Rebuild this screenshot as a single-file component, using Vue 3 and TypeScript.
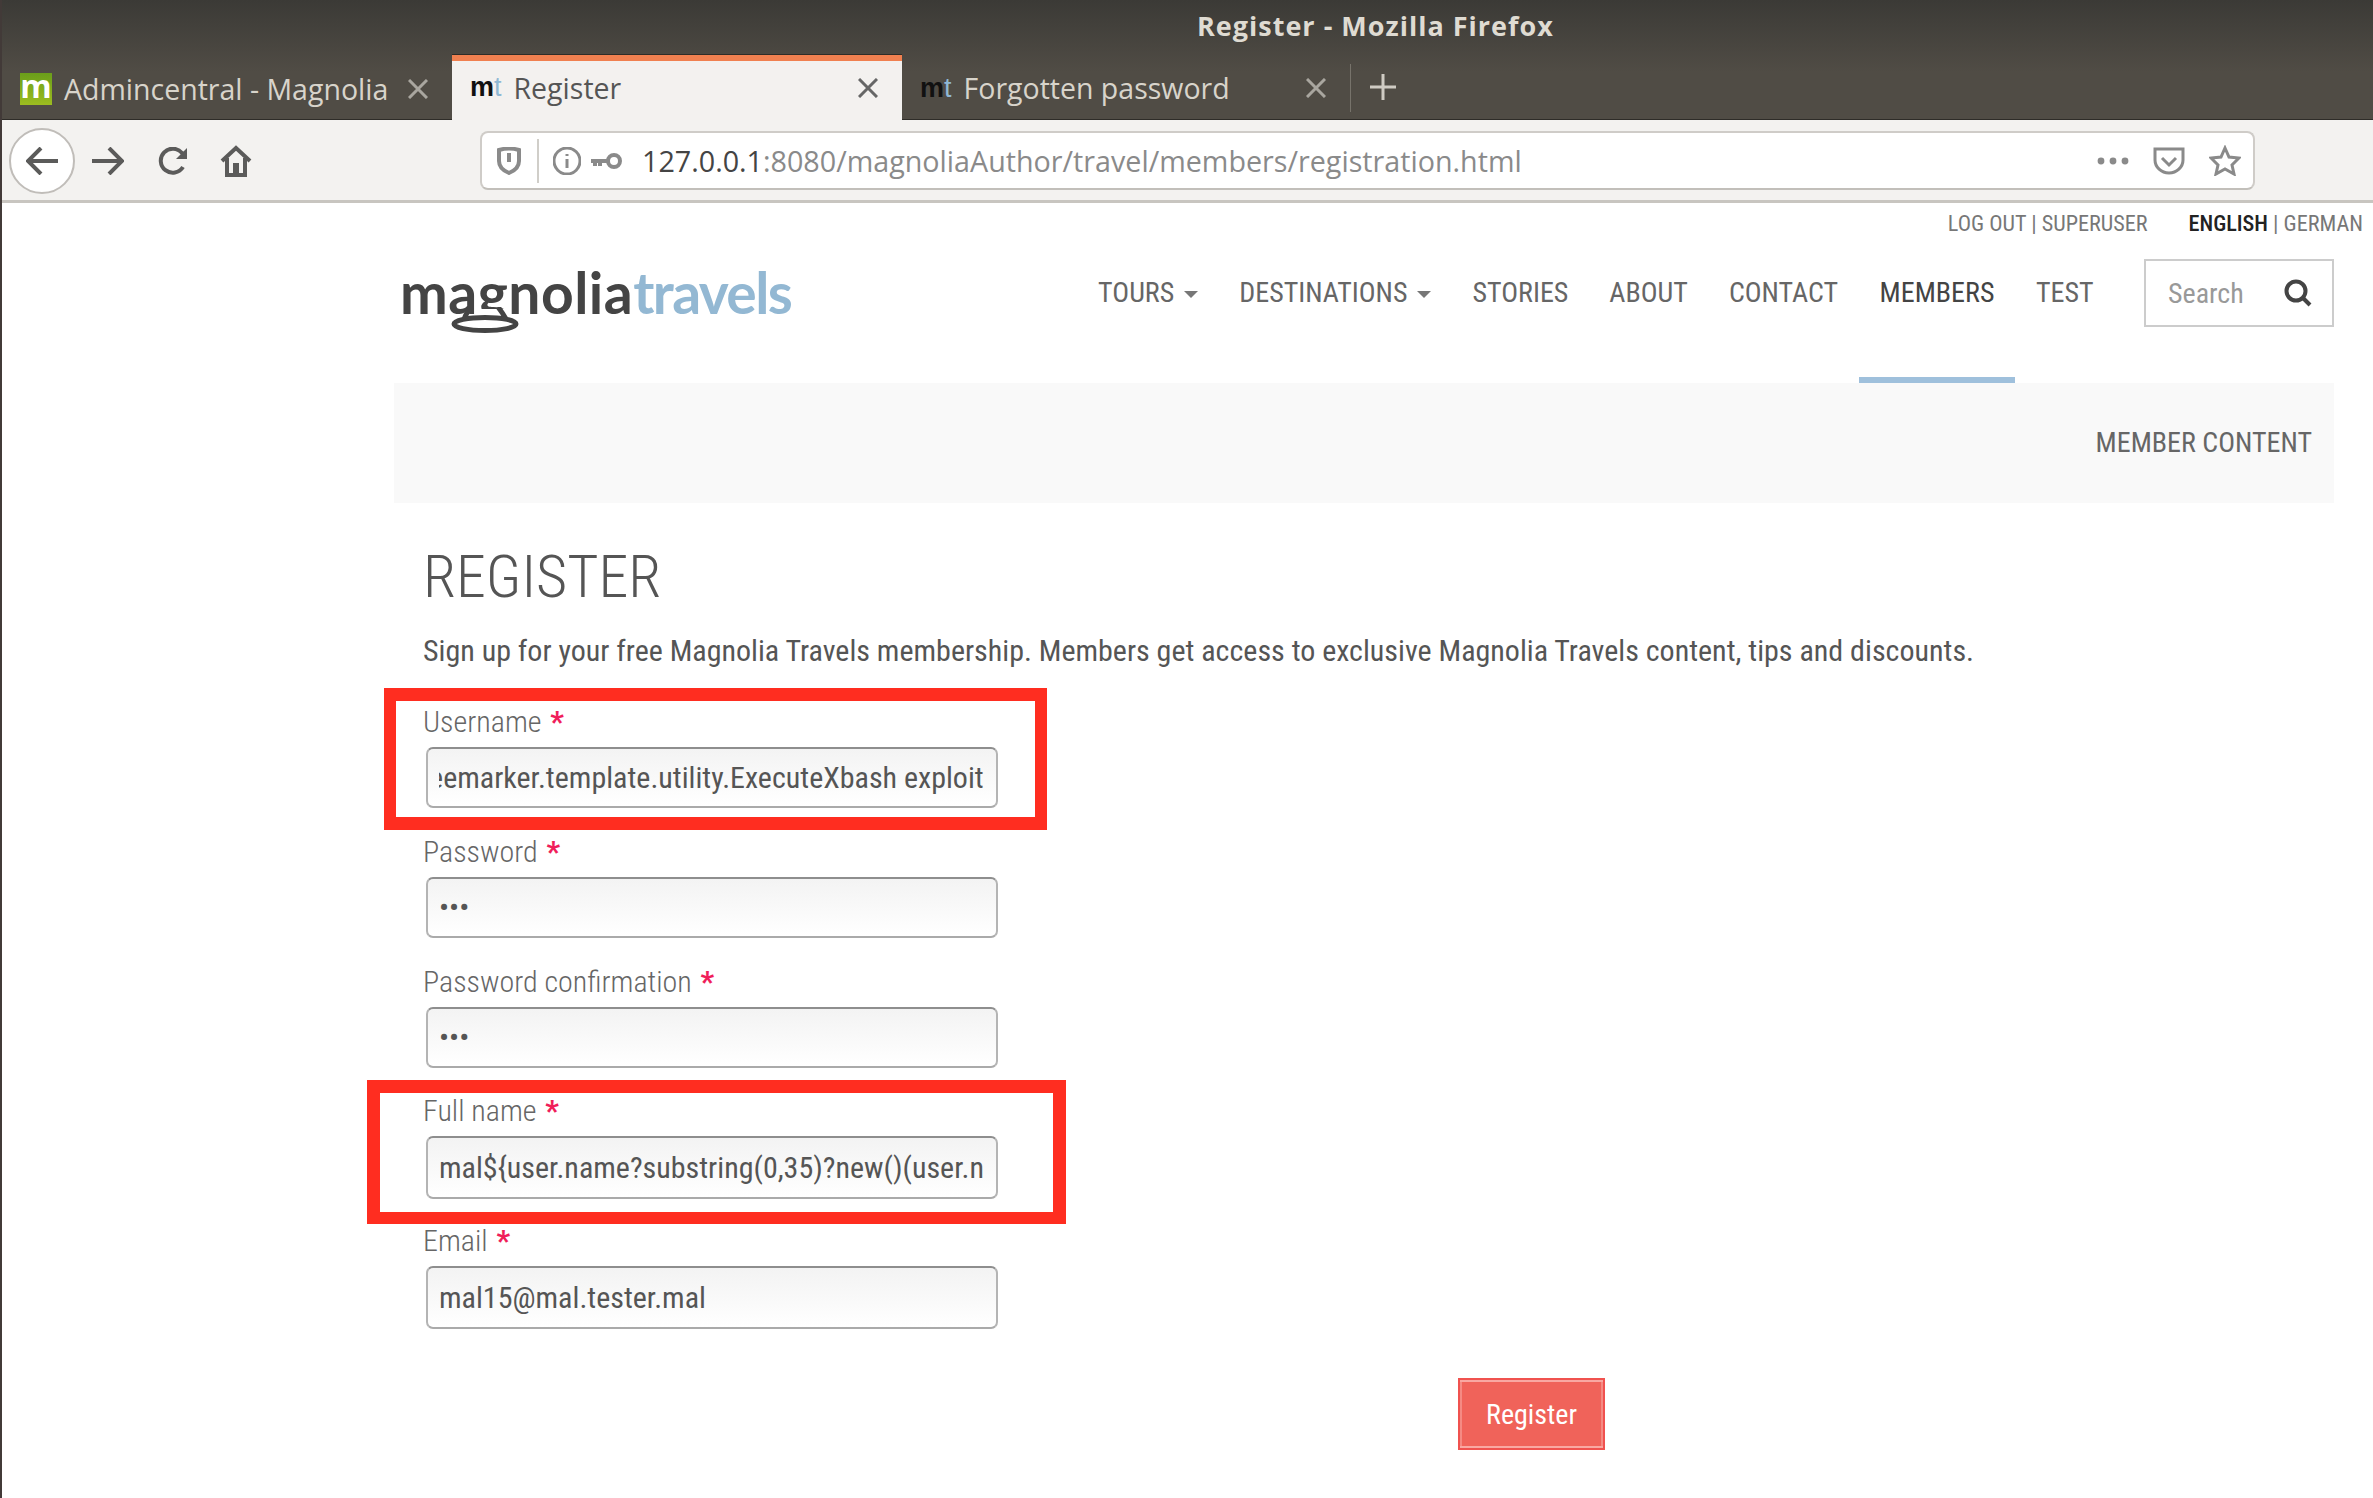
<template>
  <div class="app">
    <header class="titlebar">
      <div class="window-title">Register - Mozilla Firefox</div>
      <div class="tabs">
        <div class="tab tab-first">
          <span class="fav-green">m</span>
          <span class="tab-label">Admincentral - Magnolia</span>
          <svg class="tab-close" viewBox="0 0 20 20"><path d="M1 1 19 19M19 1 1 19" /></svg>
        </div>
        <div class="tab tab-active">
          <span class="fav-mt">m<i>t</i></span>
          <span class="tab-label">Register</span>
          <svg class="tab-close" viewBox="0 0 20 20"><path d="M1 1 19 19M19 1 1 19" /></svg>
        </div>
        <div class="tab tab-last">
          <span class="fav-mt">m<i>t</i></span>
          <span class="tab-label">Forgotten password</span>
          <svg class="tab-close" viewBox="0 0 20 20"><path d="M1 1 19 19M19 1 1 19" /></svg>
        </div>
        <svg class="new-tab" viewBox="0 0 28 28"><path d="M14 1V27M1 14H27" /></svg>
      </div>
    </header>

    <div class="toolbar">
      <button class="back">
        <svg viewBox="0 0 32 28"><path d="M2 14H32M15 1 2 14 15 27" /></svg>
      </button>
      <svg class="tool forward" viewBox="0 0 32 28"><path d="M0 14H30M17 1 30 14 17 27" /></svg>
      <svg class="tool reload" viewBox="0 0 30 28"><path d="M25 20A12 12 0 1 1 24 6L27 9" /><path class="solid" d="M29 1V12H18Z" /></svg>
      <svg class="tool home" viewBox="0 0 32 32"><path d="M2 16 16 3 30 16M7 13V30H25V13" /><path class="solid" d="M13 18H19V30H13Z" /></svg>

      <div class="urlbar">
        <svg class="shield" viewBox="0 0 24 28"><path d="M2 3Q12 0 22 3V14Q22 22 12 26 2 22 2 14Z" /><path d="M12 6V15" /></svg>
        <span class="url-sep"></span>
        <svg class="info" viewBox="0 0 28 28"><circle cx="14" cy="14" r="13" /><path d="M14 12V21" /><path d="M14 7V9" /></svg>
        <svg class="key" viewBox="0 0 32 18"><circle cx="23" cy="9" r="6" /><path d="M0 9H17M4 9V14M9 9V14" /></svg>
        <span class="url"><b>127.0.0.1</b>:8080/magnoliaAuthor/travel/members/registration.html</span>
        <svg class="dots" viewBox="0 0 32 8"><circle cx="4" cy="4" r="3.4" /><circle cx="16" cy="4" r="3.4" /><circle cx="28" cy="4" r="3.4" /></svg>
        <svg class="pocket" viewBox="0 0 32 28"><path d="M2 2H30V13A14 13 0 0 1 2 13Z" /><path d="M9 11 16 18 23 11" /></svg>
        <svg class="star" viewBox="0 0 32 31"><path d="M16 3 20 12 30 13 23 20 25 29 16 24 7 29 9 20 2 13 12 12Z" /></svg>
      </div>
    </div>

    <div class="page">
      <div class="util">
        <span>LOG OUT | SUPERUSER</span>
        <span class="langs"><b>ENGLISH</b> | GERMAN</span>
      </div>

      <div class="masthead">
        <div class="logo">
          <span class="logo-dark">ma<span class="logo-g">g</span>nolia</span><span class="logo-blue">travels</span>
          <svg class="logo-loop" viewBox="0 0 70 26"><path d="M22 0Q16 5 14 13M48 0Q52 5 56 12" /><ellipse cx="35" cy="17" rx="31" ry="6.5" /></svg>
        </div>
        <nav class="nav">
          <a v-for="item in navItems" :key="item.label" :class="{ current: item.current }">
            {{ item.label }}<span v-if="item.menu" class="caret"></span>
          </a>
        </nav>
        <div class="search">
          <span>Search</span>
          <svg viewBox="0 0 28 28"><circle cx="12" cy="12" r="9.5" /><path d="M19 19 26 26" /></svg>
        </div>
      </div>

      <div class="banner">MEMBER CONTENT</div>

      <main class="content">
        <h1>REGISTER</h1>
        <p>Sign up for your free Magnolia Travels membership. Members get access to exclusive Magnolia Travels content, tips and discounts.</p>

        <form ref="form" class="form" @submit.prevent>
          <div v-for="field in fields" :key="field.label" class="field" :class="field.cls">
            <span v-if="field.mark" class="mark" :class="field.mark"></span>
            <label>{{ field.label }} <em>*</em></label>
            <input :type="field.type" :value="field.value" readonly />
          </div>
          <div class="actions">
            <button class="submit" type="submit">Register</button>
          </div>
        </form>
      </main>
    </div>
  </div>
</template>

<script setup lang="ts">
import { onMounted, ref } from 'vue';

const navItems = [
  { label: 'TOURS', menu: true },
  { label: 'DESTINATIONS', menu: true },
  { label: 'STORIES' },
  { label: 'ABOUT' },
  { label: 'CONTACT' },
  { label: 'MEMBERS', current: true },
  { label: 'TEST' },
];

const fields = [
  { label: 'Username', type: 'text', value: 'mal.freemarker.template.utility.ExecuteXbash exploit', mark: 'mark-user' },
  { label: 'Password', type: 'password', value: 'mal' },
  { label: 'Password confirmation', type: 'password', value: 'mal', cls: 'field-close' },
  { label: 'Full name', type: 'text', value: 'mal${user.name?substring(0,35)?new()(user.name)}', mark: 'mark-name', cls: 'field-tall' },
  { label: 'Email', type: 'email', value: 'mal15@mal.tester.mal', cls: 'field-tall' },
];

const form = ref<HTMLFormElement | null>(null);

onMounted(() => {
  // The username input shows the end of its long value
  const input = form.value?.querySelector('input');
  if (input) input.scrollLeft = input.scrollWidth;
});
</script>

<style>
html,
body {
  margin: 0;
  background: #fff;
}
</style>

<style scoped>
.app {
  height: 1498px;
  overflow: hidden;
  box-sizing: border-box;
  border-left: 2px solid #423a38;
  font-family: Roboto, 'Liberation Sans', sans-serif;
}

.titlebar {
  height: 120px;
  box-sizing: border-box;
  background: linear-gradient(#3b3a36, #504c45 60%);
  border-bottom: 1px solid #2e2c28;
  font-family: 'Open Sans', sans-serif;
}
.window-title {
  height: 55px;
  padding-left: 1195px;
  line-height: 52px;
  font-size: 27px;
  font-weight: 700;
  letter-spacing: 1px;
  color: #dfdbd2;
}
.tabs {
  display: flex;
  height: 64px;
}
.tab {
  display: flex;
  align-items: center;
  box-sizing: border-box;
  font-size: 28.5px;
  color: #d8d4cb;
}
.tab-first {
  width: 450px;
  padding: 3px 0 0 18px;
}
.tab-active {
  width: 450px;
  height: 65px;
  padding: 0 0 6px 18px;
  background: #f3f1ef;
  border-top: 6px solid #f08050;
  box-shadow: 0 -1px 0 #2e2c28;
  color: #555;
}
.tab-last {
  width: 449px;
  height: 48px;
  margin-top: 9px;
  padding-left: 18px;
  border-right: 1px solid #77736b;
}
.tab-label {
  flex: 1;
  padding-left: 12px;
}
.tab-close {
  width: 20px;
  height: 20px;
  margin-right: 24px;
  fill: none;
  stroke: #a9a69f;
  stroke-width: 3;
}
.tab-active .tab-close {
  stroke: #666;
}
.fav-green {
  width: 32px;
  height: 32px;
  line-height: 26px;
  text-align: center;
  font-size: 32px;
  font-weight: 700;
  color: #fff;
  background: linear-gradient(#6a9e1a, #9cbc20);
}
.fav-mt {
  font-family: 'Liberation Sans', sans-serif;
  font-size: 27px;
  font-weight: 700;
  color: #111;
}
.fav-mt i {
  font-style: normal;
  font-weight: 400;
  color: #8fb8d4;
}
.new-tab {
  width: 28px;
  height: 28px;
  margin: 18px 0 0 18px;
  fill: none;
  stroke: #cfcbc3;
  stroke-width: 3;
}

.toolbar {
  display: flex;
  align-items: center;
  height: 83px;
  box-sizing: border-box;
  padding: 1px 0 0 7px;
  background: #f3f2f0;
  border-bottom: 3px solid #c8c5c0;
}
.back {
  width: 66px;
  height: 66px;
  padding: 0;
  display: flex;
  align-items: center;
  justify-content: center;
  background: #fff;
  border: 2px solid #c0bdb9;
  border-radius: 50%;
}
.back svg {
  width: 32px;
  height: 28px;
  fill: none;
  stroke: #5b5b5a;
  stroke-width: 4;
}
.tool {
  fill: none;
  stroke: #5b5b5a;
  stroke-width: 4;
}
.tool .solid {
  fill: #5b5b5a;
  stroke: none;
}
.forward {
  width: 32px;
  height: 28px;
  margin-left: 17px;
}
.reload {
  width: 30px;
  height: 28px;
  margin-left: 34px;
}
.home {
  width: 32px;
  height: 32px;
  margin-left: 32px;
}

.urlbar {
  display: flex;
  align-items: center;
  width: 1775px;
  height: 59px;
  box-sizing: border-box;
  margin-left: 228px;
  background: #fff;
  border: 2px solid #cfccc8;
  border-bottom-color: #c2bfba;
  border-radius: 8px;
  font-family: 'Open Sans', sans-serif;
  font-size: 28.7px;
  color: #8a8a8a;
}
.urlbar svg {
  fill: none;
  stroke: #8a8a8a;
  stroke-width: 3;
  flex: none;
}
.urlbar .shield {
  width: 24px;
  height: 28px;
  margin-left: 15px;
  stroke-width: 4;
}
.url-sep {
  width: 2px;
  height: 44px;
  margin-left: 16px;
  background: #d0cec9;
}
.info {
  width: 28px;
  height: 28px;
  margin-left: 14px;
}
.urlbar .key {
  width: 32px;
  height: 18px;
  margin-left: 10px;
  stroke-width: 4;
}
.url {
  flex: 1;
  padding-left: 19px;
  white-space: nowrap;
}
.url b {
  font-weight: 400;
  color: #444;
}
.urlbar .dots {
  width: 32px;
  height: 8px;
  fill: #8a8a8a;
  stroke: none;
}
.pocket {
  width: 32px;
  height: 28px;
  margin-left: 24px;
}
.star {
  width: 32px;
  height: 31px;
  margin: 0 12px 0 24px;
}

.page {
  padding: 0 39px 0 392px;
  font-stretch: 75%;
}
.util {
  display: flex;
  justify-content: flex-end;
  gap: 41px;
  margin-right: -29px;
  height: 32px;
  padding-top: 8px;
  box-sizing: border-box;
  line-height: 24px;
  font-size: 22.2px;
  color: #777;
}
.util b {
  font-weight: 500;
  color: #222;
}
.masthead {
  display: flex;
  align-items: flex-start;
  height: 148px;
}
.logo {
  position: relative;
  margin: 24px 0 0 6px;
  font-family: Lato, sans-serif;
  font-size: 57px;
  line-height: 66px;
  font-weight: 700;
  font-stretch: normal;
  white-space: nowrap;
}
.logo-dark {
  color: #444;
  letter-spacing: 0.5px;
}
.logo-blue {
  letter-spacing: -1.6px;
  color: #93b8d3;
}
.logo-g {
  display: inline-block;
  clip-path: inset(0 0 16px 0);
}
.logo-loop {
  position: absolute;
  left: 50px;
  top: 48px;
  width: 70px;
  height: 26px;
  fill: none;
  stroke: #444;
  stroke-width: 5;
}
.nav {
  display: flex;
  margin-left: auto;
  font-size: 28px;
  color: #666;
}
.nav a {
  display: flex;
  align-items: flex-start;
  height: 148px;
  padding: 38px 20.5px 0;
  line-height: 40px;
  box-sizing: border-box;
  border-bottom: 6px solid transparent;
}
.nav a.current {
  padding: 38px 21px 0;
  color: #444;
  border-bottom-color: #9fc0dc;
}
.caret {
  margin: 18px 0 0 10px;
  border: 7px solid transparent;
  border-top-color: #777;
  border-bottom: 0;
}
.search {
  display: flex;
  align-items: center;
  justify-content: space-between;
  width: 190px;
  height: 68px;
  box-sizing: border-box;
  margin: 24px 0 0 30px;
  padding: 0 20px 0 22px;
  border: 2px solid #ccc;
  font-size: 28px;
  color: #999;
}
.search svg {
  width: 28px;
  height: 28px;
  fill: none;
  stroke: #444;
  stroke-width: 4;
}
.banner {
  height: 120px;
  padding-right: 22px;
  line-height: 120px;
  text-align: right;
  font-size: 28px;
  color: #666;
  background: #f9f9f9;
}

.content {
  padding-left: 29px;
}
h1 {
  margin: 36px 0 0;
  font-size: 60px;
  line-height: 76px;
  font-weight: 300;
  color: #555;
}
p {
  margin: 14px 0 0;
  font-size: 30px;
  line-height: 44px;
  color: #555;
}
.form {
  margin-top: 27px;
}
.field {
  position: relative;
  width: 575px;
  margin-bottom: 22px;
}
.field-tall {
  margin-bottom: 20px;
}
.field-close {
  margin-bottom: 21px;
}
label {
  display: block;
  height: 47px;
  line-height: 44px;
  font-size: 30px;
  font-weight: 300;
  color: #666;
}
em {
  font-style: normal;
  font-weight: 700;
  color: #f01e5a;
  margin-left: 2px;
}
input {
  display: block;
  width: 572px;
  height: 61px;
  box-sizing: border-box;
  margin-left: 3px;
  padding: 0 12px 0 11px;
  background: linear-gradient(#f3f3f3, #fff);
  border: 2px solid #b4b4b4;
  border-top-color: #8e8e8e;
  border-bottom-color: #aaa;
  border-radius: 7px;
  outline: none;
  font-family: inherit;
  font-stretch: inherit;
  font-size: 30px;
  color: #555;
}
.field-tall input {
  height: 63px;
}
.mark {
  position: absolute;
  box-sizing: border-box;
  border-style: solid;
  border-color: #ff2d20;
}
.mark-user {
  left: -39px;
  top: -12px;
  width: 663px;
  height: 142px;
  border-width: 13px 12px;
}
.mark-name {
  left: -56px;
  top: -9px;
  width: 699px;
  height: 144px;
  border-width: 13px 13px 12px;
}
.actions {
  margin-top: 49px;
  padding-left: 1035px;
}
.submit {
  display: block;
  width: 147px;
  height: 72px;
  padding: 0;
  background: #f0635a;
  border: 2px solid #f0524f;
  box-shadow: inset 0 2px 0 #f9a8a2, inset 0 -2px 0 #f9a8a2, inset 2px 0 0 #f58a83, inset -2px 0 0 #f58a83;
  font-family: inherit;
  font-stretch: inherit;
  font-size: 28px;
  color: #fff;
}
</style>
